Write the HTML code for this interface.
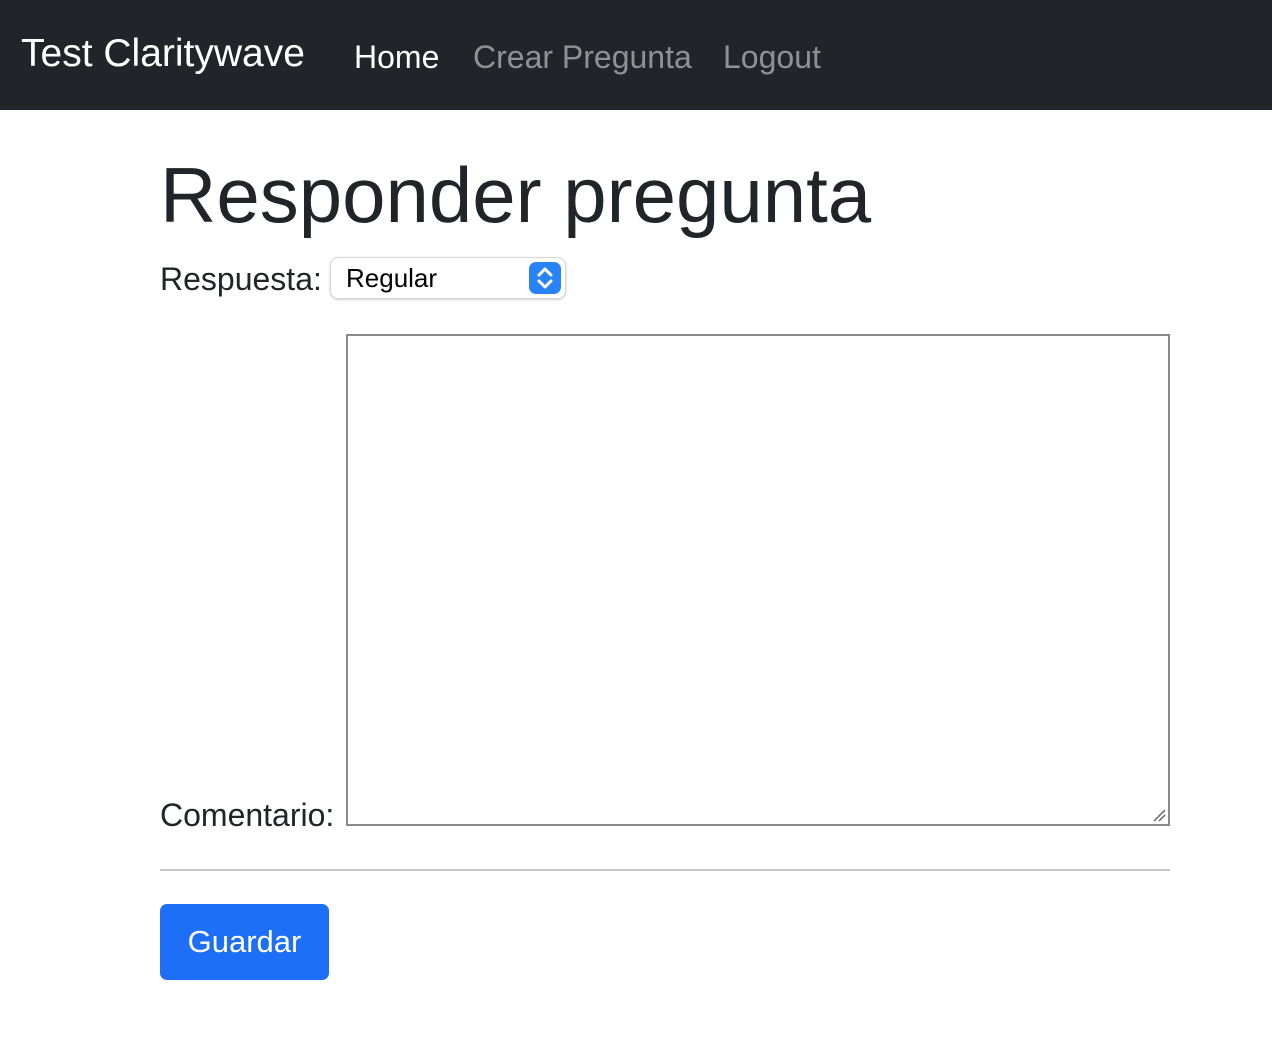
<!DOCTYPE html>
<html><head><meta charset="utf-8"><style>
*{box-sizing:border-box}
body{margin:0;font-family:"Liberation Sans",sans-serif;color:#212529;background:#fff;width:1272px;height:1056px;overflow:hidden}
nav{height:110px;background:#212529;position:relative}
nav span{position:absolute;top:30px;font-size:38px;line-height:48px}
.brand{left:21px;color:#fff;font-size:39px}
h1{position:absolute;left:160px;top:150px;margin:0;font-size:78px;font-weight:500;line-height:90px;letter-spacing:0}
.lbl{position:absolute;font-size:32px;line-height:36px}
.sel{position:absolute;left:330px;top:257px;width:236px;height:42px;border:1px solid #d6d6d6;border-radius:8px;box-shadow:0 1px 2px rgba(0,0,0,.2);font-size:26px;line-height:40px;padding-left:15px;color:#000}
.arr{position:absolute;right:4px;top:4px;width:32px;height:32px;background:#2a82f7;border-radius:7px}
.ta{position:absolute;left:346px;top:334px;width:824px;height:492px;border:2px solid #8a8a8a}
hr{position:absolute;left:160px;top:869px;width:1010px;margin:0;border:0;border-top:2px solid #c8c8c8}
.btn{position:absolute;left:160px;top:904px;width:169px;height:76px;background:#1d6ff5;border-radius:7px;color:#fff;font-size:31px;line-height:76px;text-align:center}
</style></head><body>
<nav><span class="brand">Test Claritywave</span><span style="left:354px;color:#fff;font-size:32px;top:33px">Home</span><span style="left:473px;color:#8f9193;font-size:32px;top:33px">Crear Pregunta</span><span style="left:723px;color:#8f9193;font-size:32px;top:33px">Logout</span></nav>
<h1>Responder pregunta</h1>
<div class="lbl" style="left:160px;top:261px">Respuesta:</div>
<div class="sel">Regular<div class="arr"><svg width="32" height="32" viewBox="0 0 32 32"><path d="M10 13l6-6 6 6M10 19l6 6 6-6" stroke="#fff" stroke-width="3" fill="none" stroke-linecap="round" stroke-linejoin="round"/></svg></div></div>
<div class="lbl" style="left:160px;top:797px">Comentario:</div>
<div class="ta"><svg style="position:absolute;right:2px;bottom:2px" width="14" height="14"><path d="M2 13L13 2M7 13L13 7" stroke="#666" stroke-width="1.5"/></svg></div>
<hr>
<div class="btn">Guardar</div>
</body></html>
